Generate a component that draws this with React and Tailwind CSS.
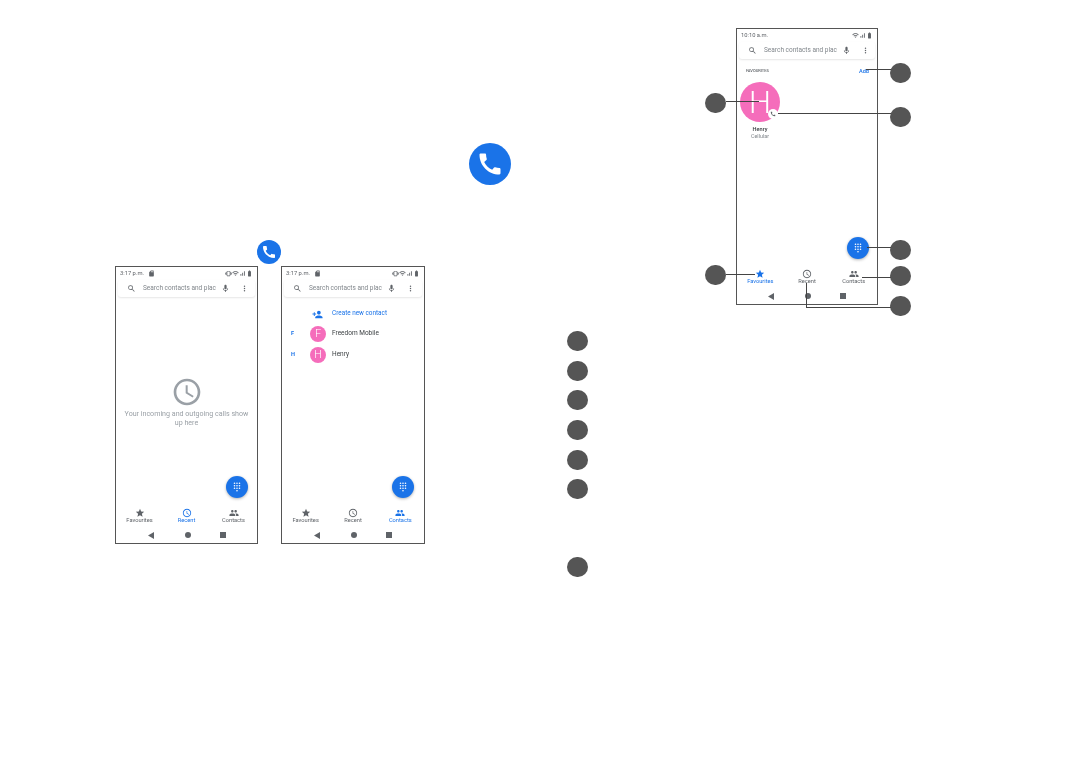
import React from 'react';
import {
  MdAccessTime, MdBatteryFull, MdCall, MdDialpad, MdMic, MdMoreVert, MdPeople,
  MdPersonAdd, MdSdCard, MdSearch, MdSignalCellularAlt, MdStar, MdVibration, MdWifi,
} from 'react-icons/md';

const bulletRows = ['mt-0', 'mt-[10px]', 'mt-[9px]', 'mt-[10px]', 'mt-[10px]', 'mt-[9px]', 'mt-[58px]'];

const navItems = [
  { id: 'favourites', label: 'Favourites', Icon: MdStar },
  { id: 'recent', label: 'Recent', Icon: MdAccessTime },
  { id: 'contacts', label: 'Contacts', Icon: MdPeople },
];

function Bullet({ className = '' }) {
  return <div className={`h-[20px] w-[21px] rounded-full bg-[#555555] ${className}`} />;
}

function SearchBar() {
  return (
    <div className="mx-[2px] flex h-[17px] shrink-0 items-center rounded-[3px] bg-white shadow-[0_1px_2px_rgba(0,0,0,0.1)]">
      <MdSearch className="ml-[9px] text-[#5f6368]" size={9} />
      <span className="ml-[7px] w-[74px] whitespace-nowrap text-[6.5px] text-[#80868b]">
        Search contacts and plac
      </span>
      <MdMic className="ml-[4px] text-[#5f6368]" size={9} />
      <MdMoreVert className="ml-[10px] text-[#5f6368]" size={9} />
    </div>
  );
}

function NavBar({ active }) {
  return (
    <div className="mt-auto">
      <div className="grid grid-cols-3">
        {navItems.map(({ id, label, Icon }) => (
          <div key={id} className={`flex flex-col items-center ${id === active ? 'text-[#1a73e8]' : 'text-[#5f6368]'}`}>
            <Icon size={10} />
            <span className="mt-[-1px] text-[5.7px] leading-[7px]">{label}</span>
          </div>
        ))}
      </div>
      <div className="flex h-[19px] items-center justify-center gap-[29px] pt-[3px]">
        <svg className="mr-[2px]" width="6" height="7" viewBox="0 0 6 7"><polygon points="0,3.5 6,0 6,7" fill="#5f6368" /></svg>
        <div className="h-[6px] w-[6px] rounded-full bg-[#5f6368]" />
        <div className="h-[6px] w-[6px] bg-[#5f6368]" />
      </div>
    </div>
  );
}

function Phone({ time, sizeClass, withStorage, active, fabClass, children, overlay }) {
  return (
    <div className={`relative box-border flex flex-col border-[1.5px] border-[#555555] bg-white ${sizeClass}`}>
      <div className="flex h-[13px] shrink-0 items-center px-[4px] text-[#5f6368]">
        <span className="text-[5.8px]">{time}</span>
        {withStorage && <MdSdCard className="ml-[4px]" size={7} />}
        <div className="ml-auto flex items-center">
          {withStorage && <MdVibration size={7} />}
          <MdWifi size={7} />
          <MdSignalCellularAlt size={7} />
          <MdBatteryFull size={7} />
        </div>
      </div>
      {children}
      <NavBar active={active} />
      <div className={`absolute flex h-[22px] w-[22px] items-center justify-center rounded-full bg-[#1a73e8] shadow-[0_1px_3px_rgba(0,0,0,0.3)] ${fabClass}`}>
        <MdDialpad className="text-white" size={10} />
      </div>
      {overlay}
    </div>
  );
}

function ContactRow({ letter, name }) {
  return (
    <div className="flex h-[21px] items-center">
      <span className="ml-[9px] w-[16px] text-[5.6px] font-bold text-[#1a73e8]">{letter}</span>
      <div className="ml-[3px] flex h-[16px] w-[16px] items-center justify-center rounded-full bg-[#f56dbb] text-[11px] font-light leading-none text-white">
        {letter}
      </div>
      <span className="ml-[6px] text-[6.5px] text-[#3c4043]">{name}</span>
    </div>
  );
}

function Callouts() {
  return (
    <>
      {/* dots, left side */}
      <Bullet className="absolute left-[-32px] top-[64px]" />
      <Bullet className="absolute left-[-32px] top-[236px]" />
      {/* dots, right side */}
      <Bullet className="absolute left-[153px] top-[34px]" />
      <Bullet className="absolute left-[153px] top-[78px]" />
      <Bullet className="absolute left-[153px] top-[211px]" />
      <Bullet className="absolute left-[153px] top-[237px]" />
      <Bullet className="absolute left-[153px] top-[267px]" />
      {/* leader lines */}
      <div className="absolute left-[-11px] top-[72px] h-[1px] w-[33px] bg-[#444444]" />
      <div className="absolute left-[-11px] top-[245px] h-[1px] w-[29px] bg-[#444444]" />
      <div className="absolute left-[129px] top-[40px] h-[1px] w-[25px] bg-[#444444]" />
      <div className="absolute left-[41px] top-[84px] h-[1px] w-[113px] bg-[#444444]" />
      <div className="absolute left-[130px] top-[218px] h-[1px] w-[24px] bg-[#444444]" />
      <div className="absolute left-[125px] top-[248px] h-[1px] w-[29px] bg-[#444444]" />
      <div className="absolute left-[69px] top-[254px] h-[25px] w-[1px] bg-[#444444]" />
      <div className="absolute left-[69px] top-[278px] h-[1px] w-[85px] bg-[#444444]" />
    </>
  );
}

export default function App() {
  return (
    <div className="flex h-[765px] w-[1077px] overflow-hidden bg-white font-['Roboto',sans-serif] blur-[0.3px]">
      {/* two phones under the small app icon */}
      <div className="w-[469px] shrink-0 pl-[115px] pt-[240px]">
        <div className="ml-[142px] flex h-[24px] w-[24px] items-center justify-center rounded-full bg-[#1a73e8]">
          <MdCall className="text-white" size={16} />
        </div>
        <div className="mt-[2px] flex gap-[23px]">
          <Phone time="3:17 p.m." sizeClass="h-[278px] w-[143px]" withStorage active="recent" fabClass="left-[110px] top-[209px]">
            <SearchBar />
            <div className="mt-[79px] flex flex-col items-center">
              <MdAccessTime className="text-[#9aa0a6]" size={32} />
              <p className="mt-[1px] w-[126px] text-center text-[7.1px] leading-[9px] text-[#9aa0a6]">
                Your incoming and outgoing calls show up here
              </p>
            </div>
          </Phone>
          <Phone time="3:17 p.m." sizeClass="h-[278px] w-[144px]" withStorage active="contacts" fabClass="left-[110px] top-[209px]">
            <SearchBar />
            <div className="mt-[8px] flex h-[18px] items-center">
              <MdPersonAdd className="ml-[30px] text-[#1a73e8]" size={11} />
              <span className="ml-[9px] text-[6.4px] text-[#1a73e8]">Create new contact</span>
            </div>
            <ContactRow letter="F" name="Freedom Mobile" />
            <ContactRow letter="H" name="Henry" />
          </Phone>
        </div>
      </div>

      {/* large app icon */}
      <div className="w-[98px] shrink-0 pt-[143px]">
        <div className="flex h-[42px] w-[42px] items-center justify-center rounded-full bg-[#1a73e8]">
          <MdCall className="text-white" size={28} />
        </div>
      </div>

      {/* numbered list markers */}
      <div className="w-[169px] shrink-0 pt-[331px]">
        {bulletRows.map((margin, i) => (
          <Bullet key={i} className={margin} />
        ))}
      </div>

      {/* annotated favourites screen */}
      <div className="pt-[28px]">
        <Phone
          time="10:10 a.m."
          sizeClass="h-[277px] w-[142px]"
          active="favourites"
          fabClass="left-[110px] top-[208px]"
          overlay={<Callouts />}
        >
          <SearchBar />
          <div className="mt-[5px] flex h-[14px] items-center pl-[9px] pr-[8px]">
            <span className="text-[4px] font-medium text-[#5f6368]">FAVOURITES</span>
            <span className="ml-auto text-[5.6px] font-medium text-[#1a73e8]">Add</span>
          </div>
          <div className="ml-[3px] w-[40px]">
            <div className="relative mt-[4px] flex h-[40px] w-[40px] items-center justify-center rounded-full bg-[#f56dbb] text-[31px] font-light leading-none text-white">
              H
              <div className="absolute left-[28px] top-[27px] flex h-[10px] w-[10px] items-center justify-center rounded-full bg-white">
                <MdCall className="text-[#5f6368]" size={6} />
              </div>
            </div>
          </div>
          <div className="ml-[3px] mt-[4px] w-[40px] text-center">
            <p className="text-[5.6px] font-medium leading-[7px] text-[#3c4043]">Henry</p>
            <p className="text-[5.4px] leading-[7px] text-[#80868b]">Cellular</p>
          </div>
        </Phone>
      </div>
    </div>
  );
}
